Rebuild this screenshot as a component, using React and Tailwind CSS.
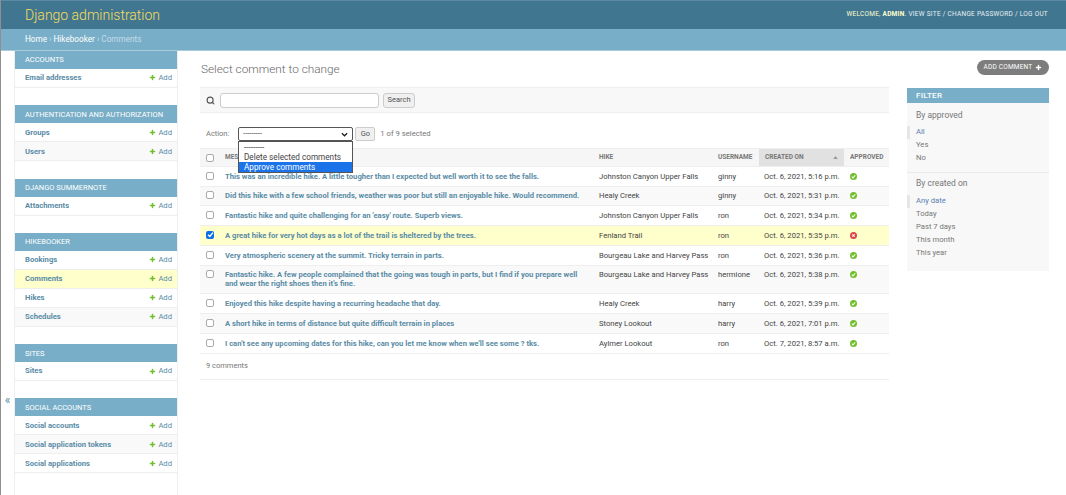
import { Search, Plus } from 'lucide-react';

const modules = [
  { name: 'Accounts', rows: ['Email addresses'] },
  { name: 'Authentication and Authorization', rows: ['Groups', 'Users'] },
  { name: 'Django Summernote', rows: ['Attachments'] },
  { name: 'Hikebooker', rows: ['Bookings', 'Comments', 'Hikes', 'Schedules'] },
  { name: 'Sites', rows: ['Sites'] },
  { name: 'Social Accounts', rows: ['Social accounts', 'Social application tokens', 'Social applications'] },
];

const comments = [
  { text: 'This was an incredible hike. A little tougher than I expected but well worth it to see the falls.', hike: 'Johnston Canyon Upper Falls', user: 'ginny', date: 'Oct. 6, 2021, 5:16 p.m.', ok: true },
  { text: 'Did this hike with a few school friends, weather was poor but still an enjoyable hike. Would recommend.', hike: 'Healy Creek', user: 'ginny', date: 'Oct. 6, 2021, 5:31 p.m.', ok: true },
  { text: "Fantastic hike and quite challenging for an 'easy' route. Superb views.", hike: 'Johnston Canyon Upper Falls', user: 'ron', date: 'Oct. 6, 2021, 5:34 p.m.', ok: true },
  { text: 'A great hike for very hot days as a lot of the trail is sheltered by the trees.', hike: 'Fenland Trail', user: 'ron', date: 'Oct. 6, 2021, 5:35 p.m.', ok: false, selected: true },
  { text: 'Very atmospheric scenery at the summit. Tricky terrain in parts.', hike: 'Bourgeau Lake and Harvey Pass', user: 'ron', date: 'Oct. 6, 2021, 5:36 p.m.', ok: true },
  { text: "Fantastic hike. A few people complained that the going was tough in parts, but I find if you prepare well and wear the right shoes then it's fine.", hike: 'Bourgeau Lake and Harvey Pass', user: 'hermione', date: 'Oct. 6, 2021, 5:38 p.m.', ok: true },
  { text: 'Enjoyed this hike despite having a recurring headache that day.', hike: 'Healy Creek', user: 'harry', date: 'Oct. 6, 2021, 5:39 p.m.', ok: true },
  { text: 'A short hike in terms of distance but quite difficult terrain in places', hike: 'Stoney Lookout', user: 'harry', date: 'Oct. 6, 2021, 7:01 p.m.', ok: true },
  { text: "I can't see any upcoming dates for this hike, can you let me know when we'll see some ? tks.", hike: 'Aylmer Lookout', user: 'ron', date: 'Oct. 7, 2021, 8:57 a.m.', ok: true },
];

const filters = [
  { title: 'By approved', items: ['All', 'Yes', 'No'] },
  { title: 'By created on', items: ['Any date', 'Today', 'Past 7 days', 'This month', 'This year'] },
];

const gridCols = 'grid grid-cols-[25px_369px_119px_46px_85px_45px]';

// ── Small bits ────────────────────────────────────────────────────────────────
function Checkbox({ checked }) {
  if (checked) {
    return (
      <span className="flex h-[8px] w-[8px] items-center justify-center rounded-[2px] bg-[#0b6fe8]">
        <svg width="7" height="7" viewBox="0 0 8 8" fill="none" stroke="white" strokeWidth="1.6">
          <path d="M1.2 4.2 3.2 6.2 6.8 1.8" />
        </svg>
      </span>
    );
  }
  return <span className="block h-[8px] w-[8px] rounded-[2px] border border-[#aaa] bg-white" />;
}

function StatusIcon({ ok }) {
  return (
    <svg width="7" height="7" viewBox="0 0 8 8">
      <circle cx="4" cy="4" r="4" fill={ok ? '#70bf2b' : '#dd4646'} />
      {ok
        ? <path d="M2 4.2 3.5 5.6 6 2.6" fill="none" stroke="white" strokeWidth="1.2" />
        : <path d="M2.6 2.6 5.4 5.4M5.4 2.6 2.6 5.4" fill="none" stroke="white" strokeWidth="1.2" />}
    </svg>
  );
}

function Module({ name, rows }) {
  return (
    <div className="mb-[17.3px]">
      <div className="flex h-[18px] items-center bg-[#79aec8] pl-[10px] text-[7.5px] uppercase text-white">{name}</div>
      {rows.map((r, i) => (
        <div
          key={r}
          className={`flex h-[19px] items-center justify-between border-b border-[#eee] pl-[10px] pr-[5px] text-[7.65px] ${r === 'Comments' ? 'bg-[#ffffcc]' : i % 2 === 1 ? 'bg-[#f9f9f9]' : 'bg-white'}`}
        >
          <span className="font-bold text-[#5a8ca6]">{r}</span>
          <span className="flex items-center gap-[2px] text-[#5a8ca6]">
            <Plus size={7} strokeWidth={5} color="#70bf2b" />
            Add
          </span>
        </div>
      ))}
    </div>
  );
}

// ── Main page ─────────────────────────────────────────────────────────────────
export default function App() {
  return (
    <div className="flex h-[495px] w-[1066px] flex-col overflow-hidden border-l border-[#8f8f8f] bg-white font-['Roboto',sans-serif] text-[#444]">
      {/* Header */}
      <div className="flex h-[29px] shrink-0 items-center justify-between border-t border-[#5b8aa2] bg-[#417690] pl-[24px] pr-[18px]">
        <span className="text-[14px] font-light leading-none text-[#f5dd5d]">Django administration</span>
        <span className="text-[6.5px] uppercase tracking-[0.26px] text-[#ffffcc]">
          Welcome, <b>admin</b>. <span className="text-[#e8f0f4]">View site / Change password / Log out</span>
        </span>
      </div>
      {/* Breadcrumbs */}
      <div className="flex h-[22px] shrink-0 items-center border-b border-[#a9cbdb] bg-[#79aec8] pl-[24px] text-[8.2px] text-white">
        Home <span className="mx-[2px] text-[#c4dce8]">›</span> Hikebooker <span className="mx-[2px] text-[#c4dce8]">›</span> <span className="text-[#c4dce8]">Comments</span>
      </div>

      <div className="flex min-h-0 flex-1">
        {/* Collapse toggle */}
        <div className="w-[13px] shrink-0 pt-[342px] text-center text-[12px] leading-[14px] text-[#5a8ca6]">«</div>

        {/* Sidebar */}
        <div className="w-[164px] shrink-0 border-x border-[#eee]">
          {modules.map(m => <Module key={m.name} {...m} />)}
        </div>

        {/* Content */}
        <div className="ml-[22px] w-[689px] shrink-0">
          <h1 className="mt-[10px] h-[26px] pl-[1px] text-[11.8px] font-light leading-[16px] text-[#666]">Select comment to change</h1>

          <div className="flex h-[26px] items-center border-y border-[#eee] bg-[#f8f8f8] pl-[6px]">
            <Search size={9} strokeWidth={3} color="#555" />
            <div className="ml-[5px] h-[15px] w-[159px] rounded-[3px] border border-[#ccc] bg-white" />
            <div className="ml-[4px] flex h-[15px] w-[32px] items-center justify-center rounded-[3px] border border-[#ccc] bg-[#f0f0f0] text-[7.5px] text-[#555]">Search</div>
          </div>

          <div className="relative mt-[11px] flex h-[20px] items-center pl-[6px] text-[7.5px] text-[#777]">
            <span>Action:</span>
            <div className="ml-[9px] flex h-[14px] w-[115px] items-center justify-between rounded-[2px] border border-[#555] bg-white px-[4px] text-[#333]">
              <span>---------</span>
              <svg width="7" height="7" viewBox="0 0 8 8" fill="none" stroke="#222" strokeWidth="1.5"><path d="M1 2.5 4 5.5 7 2.5" /></svg>
            </div>
            <div className="ml-[2px] flex h-[14px] w-[20px] items-center justify-center rounded-[2px] border border-[#ccc] bg-[#f0f0f0] text-[#555]">Go</div>
            <span className="ml-[5px] text-[7.7px]">1 of 9 selected</span>

            {/* Open select list */}
            <div className="absolute left-[38px] top-[17px] z-10 w-[115px] border border-[#555] bg-white text-[8.2px] leading-[10px] text-[#444]">
              <div className="px-[5px]">---------</div>
              <div className="px-[5px]">Delete selected comments</div>
              <div className="bg-[#1a73e8] px-[5px] text-white">Approve comments</div>
            </div>
          </div>

          {/* Table */}
          <div className={`${gridCols} mt-[4px] h-[19px] items-center border-y border-[#eee] bg-[#f6f6f6] text-[6.5px] font-bold uppercase text-[#777]`}>
            <span className="pl-[6px]"><Checkbox /></span>
            <span>Message</span>
            <span className="pl-[5px]">Hike</span>
            <span className="pl-[5px]">Username</span>
            <span className="flex h-full items-center justify-between bg-[#e1e1e1] px-[6px]">
              Created on
              <svg width="5" height="3" viewBox="0 0 6 4"><path d="M3 0 6 4H0z" fill="#999" /></svg>
            </span>
            <span className="pl-[6px]">Approved</span>
          </div>
          {comments.map((c, i) => (
            <div
              key={c.date}
              className={`${gridCols} border-b border-[#eee] py-[4.75px] text-[7.65px] leading-[9.2px] ${c.selected ? 'bg-[#ffffcc]' : i % 2 === 1 ? 'bg-[#f9f9f9]' : 'bg-white'}`}
            >
              <span className="pl-[6px]"><Checkbox checked={c.selected} /></span>
              <span className="pr-[4px] font-bold text-[#5a8ca6]">{c.text}</span>
              <span className="pl-[5px]">{c.hike}</span>
              <span className="pl-[5px]">{c.user}</span>
              <span className="pl-[5px]">{c.date}</span>
              <span className="pl-[6px] pt-[1px]"><StatusIcon ok={c.ok} /></span>
            </div>
          ))}
          <div className="flex h-[26px] items-center border-b border-[#eee] pl-[6px] text-[7.5px] text-[#777]">9 comments</div>
        </div>

        {/* Right column */}
        <div className="ml-[18px] w-[142px] shrink-0">
          <div className="mt-[9px] flex justify-end">
            <div className="flex h-[15px] w-[72px] items-center justify-center gap-[3px] rounded-full bg-[#7d7d7d] text-[6.5px] uppercase tracking-[0.2px] text-white">
              Add comment
              <Plus size={7} strokeWidth={5} color="white" />
            </div>
          </div>
          <div className="mt-[13px] bg-[#f8f8f8] pb-[12px]">
            <div className="flex h-[15px] items-center bg-[#79aec8] pl-[9px] text-[8px] font-medium uppercase tracking-[0.3px] text-white">Filter</div>
            {filters.map((f, fi) => (
              <div key={f.title} className={fi === 0 ? 'border-b border-[#eaeaea] pb-[8px]' : ''}>
                <div className={`pl-[9px] text-[8.5px] leading-[12px] text-[#777] ${fi === 0 ? 'pt-[6px] pb-[5px]' : 'pt-[4px] pb-[6px]'}`}>{f.title}</div>
                {f.items.map((it, i) => (
                  <div
                    key={it}
                    className={`h-[12.8px] text-[7.65px] leading-[12.8px] ${i === 0 ? 'border-l-[3px] border-[#e6e6e6] pl-[6px] text-[#5b80b2]' : 'pl-[9px] text-[#777]'}`}
                  >
                    {it}
                  </div>
                ))}
              </div>
            ))}
          </div>
        </div>
      </div>
    </div>
  );
}
